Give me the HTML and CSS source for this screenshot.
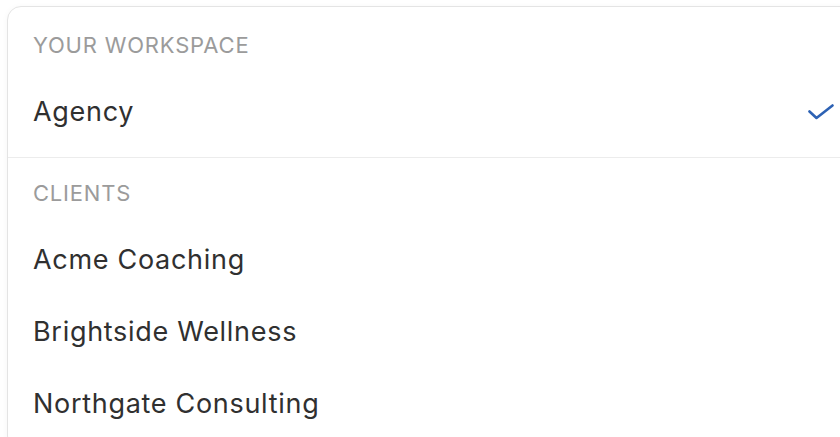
FILE: index.html
```html
<!DOCTYPE html>
<html lang="en">
<head>
  <meta charset="UTF-8">
  <title>Workspace switcher</title>
  <link rel="stylesheet" href="styles.css">
</head>
<body>

  <!-- WORKSPACE MENU -->
  <div class="menu-card">
    <div class="menu-section">
      <div class="section-label">Your workspace</div>
      <div class="menu-item selected">
        <span>Agency</span>
        <svg class="check-icon" width="26" height="16" viewBox="0 0 26 16" fill="none">
          <path d="M1.5 7.5 L8.5 14 L24.5 1.5" stroke="#2d62b4" stroke-width="2.6" stroke-linecap="round" stroke-linejoin="round"/>
        </svg>
      </div>
    </div>

    <div class="menu-section clients">
      <div class="section-label">Clients</div>
      <div class="menu-item"><span>Acme Coaching</span></div>
      <div class="menu-item"><span>Brightside Wellness</span></div>
      <div class="menu-item"><span>Northgate Consulting</span></div>
    </div>
  </div>

</body>
</html>
```

FILE: styles.css
```css
html, body {
  overflow: hidden;
}

body {
  margin: 0;
  font-family: 'Inter', 'Noto Sans', sans-serif;
  background-color: #ffffff;
  color: #303030;
}

.menu-card {
  margin: 6px 0 0 7px;
  width: 851px;
  background: white;
  border: 1px solid #e4e4e4;
  border-radius: 14px;
  box-shadow: 0 1px 6px rgba(0, 0, 0, 0.04);
}

.menu-section {
  padding: 23px 25px 9px;
}

.menu-section.clients {
  border-top: 1px solid #ececec;
  padding-top: 20px;
}

.section-label {
  font-size: 22px;
  line-height: 30px;
  letter-spacing: 0.8px;
  text-transform: uppercase;
  color: #9b9b9b;
  margin-bottom: 16px;
}

.menu-item {
  display: flex;
  align-items: center;
  justify-content: space-between;
  padding: 18px 0;
  font-size: 27px;
  line-height: 36px;
  letter-spacing: 0.7px;
}

.check-icon {
  display: block;
}
```
